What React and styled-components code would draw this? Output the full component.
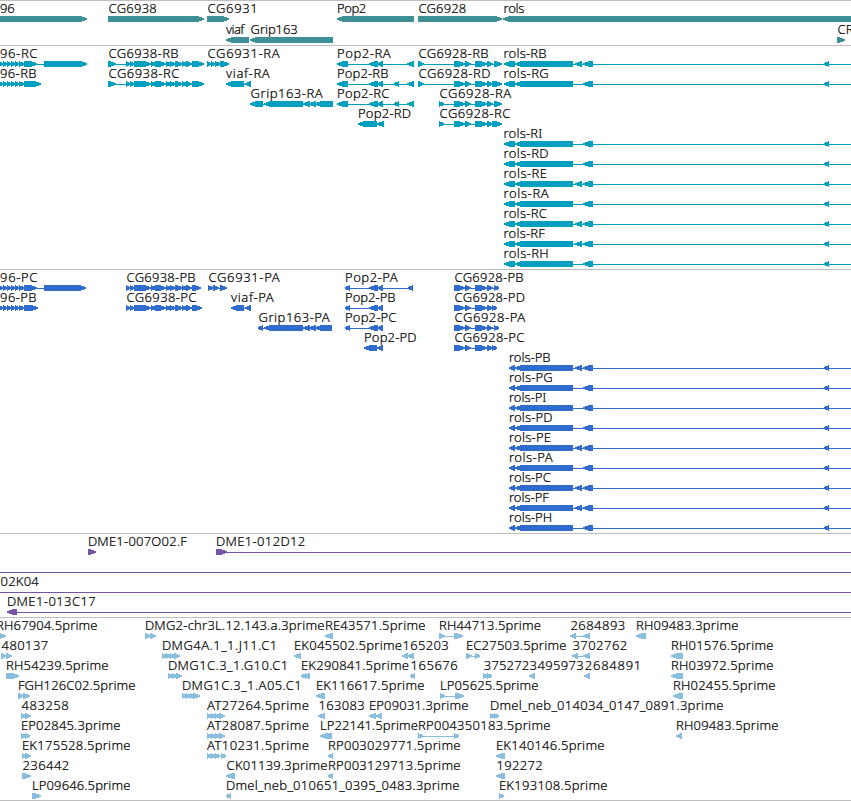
import React from "react";
import styled, { createGlobalStyle } from "styled-components";

const VIEW_WIDTH = 851;
const LABEL_FONT = '300 13px "Noto Sans", "Open Sans", sans-serif';

const GlobalStyle = createGlobalStyle`
  body { margin: 0; background: #fff; overflow: hidden; }
`;

const Browser = styled.main`
  display: flex;
  flex-direction: column;
  width: 851px;
  height: 801px;
  overflow: hidden;
  box-sizing: border-box;
  border-bottom: 1px solid #bebebe;
  background: #fff;
`;

const Track = styled.section`
  flex: none;
  box-sizing: border-box;
  height: ${(p) => p.$height}px;
  border-top: 1px solid #bebebe;
  color: ${(p) => p.$color};
  overflow: hidden;
`;

const Row = styled.div`
  display: grid;
  grid-template-columns: 851px;
  grid-template-rows: 15px 6px;
  height: ${(p) => p.$pitch}px;
`;

const Label = styled.span`
  grid-area: 1 / 1;
  justify-self: start;
  margin-left: ${(p) => p.$left}px;
  letter-spacing: ${(p) => p.$spacing}px;
  font: ${LABEL_FONT};
  line-height: 14px;
  height: 15px;
  color: #000;
  -webkit-text-stroke: 0.2px #000;
  white-space: pre;
`;

const Glyphs = styled.svg`
  grid-area: 2 / 1;
  display: block;
  width: 851px;
  height: 6px;
  fill: currentColor;
`;

// Spreads a label over the ink extent [from, to] of its track position.
const ctx = document.createElement("canvas").getContext("2d");
function fitLabel(text, from, to) {
  ctx.font = LABEL_FONT;
  const m = ctx.measureText(text);
  const ink = m.actualBoundingBoxLeft + m.actualBoundingBoxRight;
  return {
    left: from - 0.4 + m.actualBoundingBoxLeft,
    spacing: (to + 0.2 - from - ink) / Math.max(1, text.length - 1),
  };
}

const feature = (dir) => (text, from, to, exons, line) => ({ dir, text, from, to, exons, line });
const fwd = feature(1);
const rev = feature(-1);

function exonPoints([a, b], dir) {
  const head = Math.min(b - a, 7);
  return dir > 0
    ? `${a},0 ${b - head},0 ${b - head * 0.45},1 ${b},2.4 ${b},3.6 ${b - head * 0.45},5 ${b - head},6 ${a},6`
    : `${b},0 ${a + head},0 ${a + head * 0.45},1 ${a},2.4 ${a},3.6 ${a + head * 0.45},5 ${a + head},6 ${b},6`;
}

function Feature({ data }) {
  const { dir, exons, line } = data;
  const [start, end] = line || [exons[0][0], exons[exons.length - 1][1]];
  return (
    <g shapeRendering="crispEdges">
      <rect x={start} y="3" width={end - start} height="1" />
      {exons.map((e, i) => (
        <polygon key={i} points={exonPoints(e, dir)} />
      ))}
    </g>
  );
}

function FeatureRow({ features, pitch }) {
  return (
    <Row $pitch={pitch}>
      {features
        .filter((f) => f.text)
        .map((f) => {
          const { left, spacing } = fitLabel(f.text, f.from, f.to);
          return (
            <Label key={f.text} $left={left} $spacing={spacing}>
              {f.text}
            </Label>
          );
        })}
      <Glyphs viewBox={`0 0 ${VIEW_WIDTH} 6`}>
        {features.map((f, i) => (
          <Feature key={i} data={f} />
        ))}
      </Glyphs>
    </Row>
  );
}

const small96 = [[-4, 0], [-1, 3], [3, 7], [7, 11], [11, 15], [15, 19], [19, 24]];
const mid6938 = [[126, 130], [130, 134], [134, 151], [151, 156], [155, 166], [166, 171], [170, 175], [175, 183], [182, 187], [186, 192]];
const mid6928 = [[454, 465], [465, 471], [475, 487], [487, 493]];
const pop2 = [[369, 378], [377, 383]];
const grip = [[303, 310], [309, 316]];
const at = [[207, 212], [211, 216], [215, 220]];

const rols = (text, left, to, extra) =>
  rev(
    text, left + 1.4, to,
    [[left, 515], [515, 573], ...(extra ? [[575, 582]] : []), [583, 593], [824, 829]],
    [left, 860]
  );

const genes = [
  [
    fwd("96", 0.5, 14.5, [[-20, 87]]),
    fwd("CG6938", 109, 156.5, [[108, 204]]),
    fwd("CG6931", 208, 255.5, [[207, 229]]),
    rev("Pop2", 338.4, 366, [[337, 414]]),
    fwd("CG6928", 419, 466, [[418, 502]]),
    rev("rols", 505, 524.5, [[503, 860]]),
  ],
  [
    rev("viaf", 226.5, 245.5, [[226, 249]]),
    rev("Grip163", 251, 297.5, [[250, 333]]),
    fwd("CR", 838, 854, [[837, 845]]),
  ],
];

const transcripts = [
  [
    fwd("96-RC", 0.5, 37.5, [...small96, [24, 37], [44, 87]]),
    fwd("CG6938-RB", 109, 178.5, [[108, 116], ...mid6938, [192, 204]]),
    fwd("CG6931-RA", 208, 280, [[207, 211], [211, 215], [215, 220], [220, 229]]),
    rev("Pop2-RA", 338.4, 391, [[337, 348], ...pop2, [407, 414]]),
    fwd("CG6928-RB", 419, 488.5, [[418, 424], ...mid6928, [494, 502]]),
    rols("rols-RB", 503.5, 546.5, true),
  ],
  [
    fwd("96-RB", 0.5, 36.5, [...small96, [24, 41]]),
    fwd("CG6938-RC", 109, 179.5, [[108, 116], ...mid6938, [192, 204]]),
    rev("viaf-RA", 226.5, 270, [[226, 244], [245, 251]]),
    rev("Pop2-RB", 338.4, 388.5, [[337, 348], ...pop2, [394, 399], [407, 414]]),
    fwd("CG6928-RD", 419, 490.5, [[418, 424], ...mid6928, [492, 502]]),
    rols("rols-RG", 503.5, 548.5, false),
  ],
  [
    rev("Grip163-RA", 251, 323, [[250, 263], [264, 303], ...grip, [315, 333]]),
    rev("Pop2-RC", 338.4, 389.5, [[337, 348], ...pop2, [394, 399], [407, 414]]),
    fwd("CG6928-RA", 440, 511.5, [[439, 444], ...mid6928, [494, 502]]),
  ],
  [
    rev("Pop2-RD", 359.4, 411, [[358, 377], [377, 384]]),
    fwd("CG6928-RC", 440, 510.5, [[439, 444], ...mid6928, [492, 502]]),
  ],
  [rols("rols-RI", 503.5, 542.5, false)],
  [rols("rols-RD", 503.5, 548.5, false)],
  [rols("rols-RE", 503.5, 547, true)],
  [rols("rols-RA", 503.5, 549, false)],
  [rols("rols-RC", 503.5, 547, true)],
  [rols("rols-RF", 503.5, 545.5, true)],
  [rols("rols-RH", 503.5, 548.5, false)],
];

const proteins = [
  [
    fwd("96-PC", 0.5, 37.5, [...small96, [24, 37], [44, 86]]),
    fwd("CG6938-PB", 127, 195.5, [...mid6938, [192, 201]]),
    fwd("CG6931-PA", 209, 280, [[208, 213], [213, 219], [220, 227]]),
    rev("Pop2-PA", 346.4, 398, [[345, 350], ...pop2, [408, 413]]),
    fwd("CG6928-PB", 455, 523.5, [...mid6928, [494, 499]]),
  ],
  [
    fwd("96-PB", 0.5, 36.5, [...small96, [24, 38]]),
    fwd("CG6938-PC", 127, 196.5, [...mid6938, [192, 202]]),
    rev("viaf-PA", 231.5, 274, [[231, 244], [245, 251]]),
    rev("Pop2-PB", 346.4, 395.5, [[345, 350], ...pop2]),
    fwd("CG6928-PD", 455, 525, [...mid6928, [492, 497]]),
  ],
  [
    rev("Grip163-PA", 259, 330, [[258, 263], [264, 303], ...grip, [315, 332]]),
    rev("Pop2-PC", 346.4, 396.5, [[345, 350], ...pop2]),
    fwd("CG6928-PA", 455, 525.5, [...mid6928, [494, 499]]),
  ],
  [
    rev("Pop2-PD", 365.4, 416.5, [[364, 377], [377, 383]]),
    fwd("CG6928-PC", 455, 524.5, [...mid6928, [492, 497]]),
  ],
  [rols("rols-PB", 509, 550.5, true)],
  [rols("rols-PG", 509, 552.5, false)],
  [rols("rols-PI", 509, 546.5, false)],
  [rols("rols-PD", 509, 552.5, false)],
  [rols("rols-PE", 509, 551, true)],
  [rols("rols-PA", 509, 553, false)],
  [rols("rols-PC", 509, 551, true)],
  [rols("rols-PF", 509, 549.5, true)],
  [rols("rols-PH", 509, 552, false)],
];

const clones = [
  [
    fwd("DME1-007O02.F", 89.3, 187.5, [[88, 96]]),
    fwd("DME1-012D12", 217.3, 305, [[216, 227]], [216, 860]),
  ],
  [fwd("", 0, 0, [], [0, 860])],
  [fwd("02K04", 1, 39.5, [], [0, 860])],
  [rev("DME1-013C17", 8.3, 95.5, [[7, 17]], [7, 860])],
];

const ests = [
  [
    fwd("RH67904.5prime", -2.5, 97.5, [[-3, 6]]),
    fwd("DMG2-chr3L.12.143.a.3prime", 146.3, 324.5, [[145, 151], [150, 156]]),
    rev("RE43571.5prime", 326.3, 425.5, [[325, 333]]),
    fwd("RH44713.5prime", 440.3, 541, [[439, 445], [454, 463]]),
    rev("2684893", 570.8, 625, [[570, 576], [583, 590]]),
    rev("RH09483.3prime", 637.3, 738.5, [[636, 646]]),
  ],
  [
    fwd("480137", 2, 48, [[1, 7], [6, 12]]),
    fwd("DMG4A.1_1.J11.C1", 163.3, 275, [[162, 167], [166, 171], [170, 175], [174, 180]]),
    rev("EK045502.5prime", 295.3, 402, [[294, 301]]),
    rev("165203", 404, 448.5, [[402, 408], [407, 414]]),
    fwd("EC27503.5prime", 467.3, 566.5, [[466, 472], [475, 480]]),
    rev("3702762", 572.8, 627, [[572, 578], [583, 590]]),
    rev("RH01576.5prime", 672.3, 773.5, [[671, 683]]),
  ],
  [
    fwd("RH54239.5prime", 7.3, 108.5, [[6, 19]]),
    fwd("DMG1C.3_1.G10.C1", 169.3, 286, [[168, 173], [172, 177], [176, 182]]),
    rev("EK290841.5prime", 302.3, 409, [[301, 306], [304, 310]]),
    rev("165676", 412, 457.5, [[410, 415]]),
    fwd("375272", 484.2, 529, [[483, 488], [487, 492]]),
    rev("3495973", 530, 583.5, [[529, 535]]),
    rev("2684891", 585.2, 639, [[584, 590]]),
    rev("RH03972.5prime", 672.3, 773.5, [[671, 683]]),
  ],
  [
    fwd("FGH126C02.5prime", 19.3, 135.5, [[18, 24], [23, 30]]),
    fwd("DMG1C.3_1.A05.C1", 183.3, 299.5, [[182, 187], [186, 191], [190, 195], [193, 200]]),
    rev("EK116617.5prime", 317.3, 424.5, [[316, 325]]),
    fwd("LP05625.5prime", 441.3, 538.5, [[440, 445], [455, 464]]),
    rev("RH02455.5prime", 674.3, 775.5, [[673, 683]]),
  ],
  [
    fwd("483258", 22, 68.5, [[21, 26], [25, 31]]),
    fwd("AT27264.5prime", 207.5, 309, [...at, [219, 225]]),
    rev("163083", 320, 364.5, [[318, 325]]),
    rev("EP09031.3prime", 370.3, 468.5, [[369, 376], [376, 382]]),
    fwd("Dmel_neb_014034_0147_0891.3prime", 491.3, 723.5, [[490, 495], [494, 499]]),
  ],
  [
    fwd("EP02845.3prime", 22.3, 120.5, [[21, 26], [25, 30]]),
    fwd("AT28087.5prime", 207.5, 309, [...at, [219, 225]]),
    rev("LP22141.5prime", 321.3, 418, [[320, 332]]),
    fwd("RP004350183.5prime", 419.3, 550.5, [[418, 423], [454, 459]]),
    rev("RH09483.5prime", 677.3, 778.5, [[676, 682]]),
  ],
  [
    fwd("EK175528.5prime", 23.3, 130.5, [[22, 27], [25, 31]]),
    fwd("AT10231.5prime", 207.5, 309, [...at, [221, 226]]),
    rev("RP003029771.5prime", 329.3, 460.5, [[328, 333]]),
    rev("EK140146.5prime", 497.3, 604.5, [[496, 505]]),
  ],
  [
    fwd("236442", 22.8, 69, [[22, 31]]),
    rev("CK01139.3prime", 227, 327.5, [[226, 235]]),
    rev("RP003129713.5prime", 329.3, 460.5, [[328, 333]]),
    rev("192272", 498, 542.5, [[496, 505]]),
  ],
  [
    fwd("LP09646.5prime", 33.3, 130.5, [[32, 41]]),
    rev("Dmel_neb_010651_0395_0483.3prime", 227.3, 459.5, [[226, 231]]),
    fwd("EK193108.5prime", 500.3, 607.5, [[499, 504]]),
  ],
];

const tracks = [
  { name: "genes", rows: genes, color: "#3f8f96", height: 45, pitch: 21 },
  { name: "transcripts", rows: transcripts, color: "#009ebf", height: 224, pitch: 20 },
  { name: "proteins", rows: proteins, color: "#306ccd", height: 264, pitch: 20 },
  { name: "clones", rows: clones, color: "#7654a6", height: 84, pitch: 20 },
  { name: "ests", rows: ests, color: "#8abede", height: 183, pitch: 20 },
];

export default function App() {
  return (
    <>
      <GlobalStyle />
      <Browser>
        {tracks.map((t) => (
          <Track key={t.name} $height={t.height} $color={t.color}>
            {t.rows.map((features, i) => (
              <FeatureRow key={i} features={features} pitch={t.pitch} />
            ))}
          </Track>
        ))}
      </Browser>
    </>
  );
}
